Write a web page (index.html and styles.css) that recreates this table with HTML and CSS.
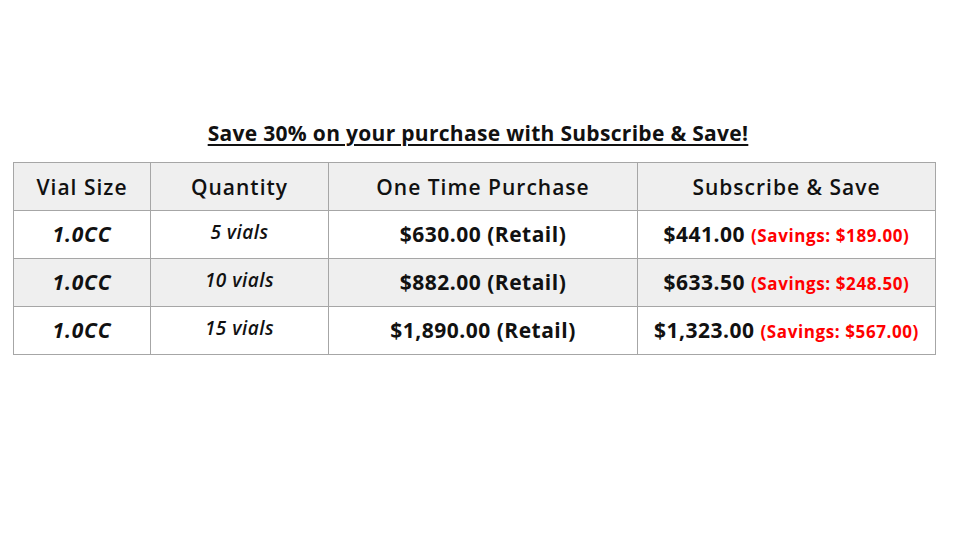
FILE: index.html
```html
<!DOCTYPE html>
<html>
<head>
<meta charset="utf-8">
<link rel="stylesheet" href="styles.css">
</head>
<body>
<div class="page">
  <h1 class="title">Save 30% on your purchase with Subscribe &amp; Save!</h1>
  <table class="prices">
    <colgroup>
      <col class="c1"><col class="c2"><col class="c3"><col class="c4">
    </colgroup>
    <tr class="head">
      <th>Vial Size</th><th>Quantity</th><th>One Time Purchase</th><th>Subscribe &amp; Save</th>
    </tr>
    <tr>
      <td class="size">1.0CC</td><td class="qty">5 vials</td><td class="price">$630.00 (Retail)</td><td class="price">$441.00 <span class="save">(Savings: $189.00)</span></td>
    </tr>
    <tr class="alt">
      <td class="size">1.0CC</td><td class="qty">10 vials</td><td class="price">$882.00 (Retail)</td><td class="price">$633.50 <span class="save">(Savings: $248.50)</span></td>
    </tr>
    <tr>
      <td class="size">1.0CC</td><td class="qty">15 vials</td><td class="price">$1,890.00 (Retail)</td><td class="price">$1,323.00 <span class="save">(Savings: $567.00)</span></td>
    </tr>
  </table>
</div>
</body>
</html>
```
FILE: styles.css
```css
html, body {
  margin: 0;
  padding: 0;
  background: #ffffff;
}
.page {
  width: 960px;
  height: 540px;
  padding: 118px 0 0 13px;
  box-sizing: border-box;
  font-family: "Open Sans", "Noto Sans", sans-serif;
  color: #111111;
}
.title {
  margin: 0 0 14px 0;
  width: 930px;
  text-align: center;
  font-size: 21px;
  line-height: 30px;
  font-weight: 700;
  letter-spacing: 0.3px;
  text-decoration: underline;
  text-underline-offset: 3px;
  text-decoration-thickness: 2px;
}
.prices {
  border-collapse: collapse;
  width: 922px;
  table-layout: fixed;
}
.c1 { width: 137px; }
.c2 { width: 178px; }
.c3 { width: 309px; }
.c4 { width: 298px; }
.prices th, .prices td {
  box-sizing: border-box;
  border: 1px solid #a6a6a6;
  height: 48px;
  padding: 0;
  text-align: center;
  vertical-align: middle;
}
.prices td {
  padding-bottom: 2px;
}
.head th {
  background: #efefef;
  font-size: 21px;
  font-weight: 600;
  letter-spacing: 1px;
}
.alt td {
  background: #efefef;
}
.size {
  font-size: 21px;
  font-weight: 700;
  font-style: italic;
  letter-spacing: 0.8px;
}
.prices td.qty {
  font-size: 19px;
  font-weight: 600;
  font-style: italic;
  letter-spacing: 0.5px;
  padding-bottom: 5px;
}
.price {
  font-size: 21px;
  font-weight: 700;
  letter-spacing: 0.5px;
}
.save {
  font-size: 17px;
  font-weight: 700;
  letter-spacing: 0.6px;
  color: #ff0000;
}
```
